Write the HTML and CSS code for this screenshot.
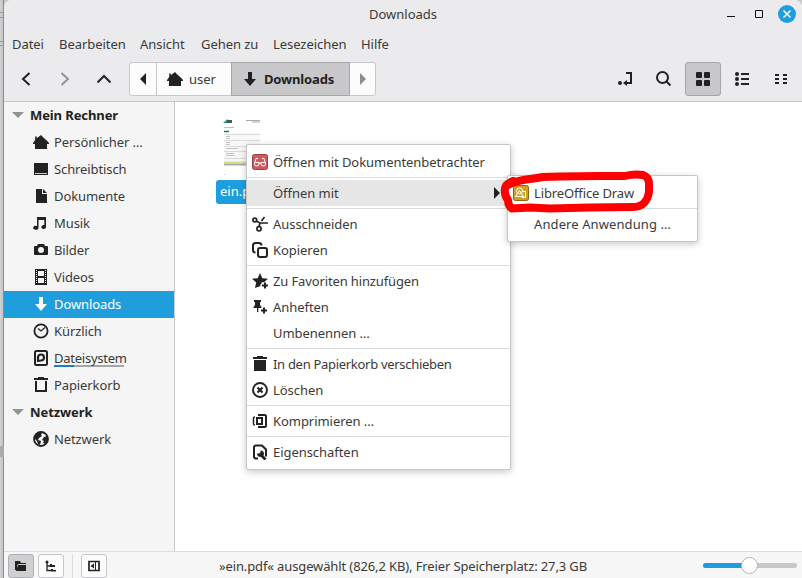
FILE: index.html
```html
<!DOCTYPE html>
<html lang="de">
<head>
    <meta charset="UTF-8">
    <title>Downloads</title>
    <link rel="stylesheet" href="styles.css">
</head>
<body>
    <svg class="sprite">
        <symbol id="home" viewBox="0 0 16 16"><path d="M8 1 3.800 4.200V2.500H2.200V6L0 9v1h2v5h12v-5h2V9l-2-2.200-4-3.500z"/></symbol>
        <symbol id="desktop" viewBox="0 0 16 16"><path d="M1 2h14v12H1z"/><path d="M2 12.500h12" stroke="#f5f5f5" stroke-width=".8"/></symbol>
        <symbol id="doc" viewBox="0 0 16 16"><path d="M3 1h6v5h5v9H3zM10 1l4 4h-4z"/></symbol>
        <symbol id="music" viewBox="0 0 16 16"><path d="M4 2h9v10a2.300 2 0 1 1-1.700-2V5H5.500v8a2.700 2 0 1 1-1.500-2z"/></symbol>
        <symbol id="camera" viewBox="0 0 16 16"><path fill-rule="evenodd" d="M5 2h6l1 2h2q1 0 1 1v7q0 1-1 1H2q-1 0-1-1V5q0-1 1-1h2zM8 5a3 3 0 1 0 0 6 3 3 0 0 0 0-6z"/></symbol>
        <symbol id="film" viewBox="0 0 16 16"><path fill-rule="evenodd" d="M2 0h12v16H2zM5 2v5h6V2zM5 9v5h6V9zM3 1v1h1V1zm0 2v1h1V3zm0 2v1h1V5zm0 2v1h1V7zm0 2v1h1V9zm0 2v1h1v-1zm0 2v1h1v-1zM12 1v1h1V1zm0 2v1h1V3zm0 2v1h1V5zm0 2v1h1V7zm0 2v1h1V9zm0 2v1h1v-1zm0 2v1h1v-1z"/></symbol>
        <symbol id="down" viewBox="0 0 16 16"><path d="M6 1h4v7h4l-6 7-6-7h4z"/></symbol>
        <symbol id="clock" viewBox="0 0 16 16"><g fill="none" stroke="currentColor"><circle cx="8" cy="8" r="6.600" stroke-width="1.800"/><path d="m5 5.500 3 2.500 4-3.500" stroke-width="1.300"/></g></symbol>
        <symbol id="disk" viewBox="0 0 16 16"><g fill="none" stroke="currentColor" stroke-width="2"><rect x="2" y="1" width="12" height="14" rx="1.500"/><path d="M5 11V7.500a3 3 0 1 1 3 3z" stroke-width="2.200"/></g></symbol>
        <symbol id="bin" viewBox="0 0 16 16"><path fill-rule="evenodd" d="M5 0h6v1h4v2H1V1h4zM2 4h12v11H2zm2 0v9h8V4z"/></symbol>
        <symbol id="globe" viewBox="0 0 16 16"><circle cx="8" cy="8" r="7" fill="none" stroke="currentColor" stroke-width="1.800"/><path d="M2 4 6 1l3 1-1 2 1 1-3 2-1 2 3 1-1 4-2-1-1-3-3-3zM11 6l3-1 1 4-3 4-2-1 1-2-2-1z"/></symbol>
        <symbol id="cut" viewBox="0 0 16 16"><g fill="none" stroke="currentColor" stroke-width="1.700"><circle cx="2.800" cy="4" r="1.900"/><circle cx="7" cy="12.700" r="2.100"/><path d="M4.500 5.200 8 7h8M7 10.600 8 7M9.500 5l3-4"/></g></symbol>
        <symbol id="copy" viewBox="0 0 16 16"><g fill="none" stroke="currentColor" stroke-width="2"><rect x="6" y="6" width="9" height="9" rx="2"/><path d="M3.500 10.500Q1 10.500 1 8V3.500Q1 1 3.500 1H7q2.500 0 2.500 2.500"/></g></symbol>
        <symbol id="star" viewBox="0 0 16 16"><path d="m8 0 2.300 5.200 5.700.5-4 3.600H9.500v1.700H8.500v2l-5.500 2 1.200-5.500L0 5.700l5.700-.5z"/><path d="M12 9.500h2v2h2v2h-2v2h-2v-2h-2v-2h2z"/></symbol>
        <symbol id="pin" viewBox="0 0 16 16"><path d="M2 1h7v2H8v3l1.500 2v1H6.300v4H5V9H1.500V8L3 6V3H2zM11 8.500h2v2h2v2h-2v2h-2v-2H9v-2h2z"/></symbol>
        <symbol id="trash" viewBox="0 0 16 16"><path d="M5 0h6v1h4v2H1V1h4zM2 4h12v11H2z"/></symbol>
        <symbol id="delete" viewBox="0 0 16 16"><g fill="none" stroke="currentColor"><circle cx="8" cy="8" r="7" stroke-width="1.900"/><path d="m5.500 5.500 5 5m0-5-5 5" stroke-width="2.200"/></g></symbol>
        <symbol id="pack" viewBox="0 0 16 16"><g fill="none" stroke="currentColor"><path d="M6 2h6.500q1.500 0 1.500 1.500v9q0 1.500-1.500 1.500H6" stroke-width="2"/><path d="M3 4Q1.500 4 1.500 5v6q0 1 1.500 1" stroke-width="1.500"/><rect x="5" y="5" width="5" height="6" stroke-width="2"/></g></symbol>
        <symbol id="props" viewBox="0 0 16 16"><path d="M6 14.500H4q-2 0-2-2V3.500q0-2 2-2h6l4 4v7" fill="none" stroke="currentColor" stroke-width="2"/><path d="M5 9.500h2l1.500-1V6.500q3.500 0 3.500 3.500l-.5 1.500 3 3-1.500 1.500h-1L9 13q-4 0-4-3.500z"/></symbol>
        <symbol id="viewer" viewBox="0 0 16 16"><rect x=".5" y=".5" width="15" height="15" rx="2" fill="#d25a5f" stroke="#983d41"/><g fill="none" stroke="#fff"><path d="M2.500 8.500h4.500v1.500q0 2-2.200 2t-2.300-2zM9 8.500h4.500v1.500q0 2-2.200 2T9 10zM7 9h2M2.500 9 4 4.500h2M13.500 9 12 4.500h-2"/></g></symbol>
        <symbol id="draw" viewBox="0 0 16 16"><rect x=".5" y=".5" width="15" height="15" rx="2" fill="#d2a01c" stroke="#896516"/><g fill="none" stroke="#fff"><circle cx="6.500" cy="6" r="3"/><path d="m2.500 11.500 4-6 4 6zM9.500 6.500h3v6H9"/></g></symbol>
    </svg>

    <div class="window">
        <header>
            <div class="titlebar">
                <span>Downloads</span>
                <svg class="controls" width="76" height="28" viewBox="0 0 76 28">
                    <path d="M4 16.500h8M32.500 10.500h7v7h-7z" fill="none" stroke="#111"/>
                    <circle cx="64" cy="14" r="9" fill="#1f9ede"/>
                    <path d="m60.500 10.500 7 7m0-7-7 7" stroke="#fff" stroke-width="1.500"/>
                </svg>
            </div>
            <nav class="menubar">
                <span>Datei</span><span>Bearbeiten</span><span>Ansicht</span><span>Gehen zu</span><span>Lesezeichen</span><span>Hilfe</span>
            </nav>
            <div class="toolbar">
                <svg class="nav" width="125" height="34" viewBox="0 0 125 34">
                    <g fill="none" stroke="#222" stroke-width="2">
                        <path d="m25.500 11-6.500 6 6.500 6M93.500 20.500l6.500-6.500 6.500 6.500"/>
                        <path d="m57.500 11 6.500 6-6.500 6" stroke="#929292"/>
                    </g>
                </svg>
                <div class="path">
                    <span class="path-prev"><svg width="6" height="12"><path d="M6 0v12L0 6z"/></svg></span>
                    <span class="path-user"><svg class="icon"><use href="#home"/></svg>user</span>
                    <span class="path-here"><svg class="icon"><use href="#down"/></svg><b>Downloads</b></span>
                    <span class="path-next"><svg width="6" height="12"><path d="M0 0v12l6-6z"/></svg></span>
                </div>
                <div class="tools">
                    <span class="tool"><svg width="16" height="16"><path d="M9 2h5v10H9" fill="none" stroke="#222" stroke-width="2"/><circle cx="3" cy="12" r="2"/><path d="m6 12 4-3v6z"/></svg></span>
                    <span class="tool"><svg width="16" height="16"><circle cx="6.500" cy="6.500" r="5.500" fill="none" stroke="#222" stroke-width="2"/><path d="m10.500 10.500 4 4" stroke="#222" stroke-width="2"/></svg></span>
                    <span class="tool active"><svg width="16" height="16"><rect x="1" y="1" width="6" height="6" rx="1"/><rect x="9" y="1" width="6" height="6" rx="1"/><rect x="1" y="9" width="6" height="6" rx="1"/><rect x="9" y="9" width="6" height="6" rx="1"/></svg></span>
                    <span class="tool"><svg width="16" height="16"><circle cx="3" cy="3" r="2"/><circle cx="3" cy="8" r="2"/><circle cx="3" cy="13" r="2"/><path d="M7 2h8v2H7zM7 7h8v2H7zM7 12h8v2H7z"/></svg></span>
                    <span class="tool"><svg width="16" height="16"><path d="M2 3h4v2H2zM2 7h4v2H2zM2 11h4v2H2zM10 3h4v2h-4zM10 7h4v2h-4zM10 11h4v2h-4z"/></svg></span>
                </div>
            </div>
        </header>

        <main>
            <aside>
                <div class="group"><i></i>Mein Rechner</div>
                <div class="place"><svg class="icon"><use href="#home"/></svg>Persönlicher …</div>
                <div class="place"><svg class="icon"><use href="#desktop"/></svg>Schreibtisch</div>
                <div class="place"><svg class="icon"><use href="#doc"/></svg>Dokumente</div>
                <div class="place"><svg class="icon"><use href="#music"/></svg>Musik</div>
                <div class="place"><svg class="icon"><use href="#camera"/></svg>Bilder</div>
                <div class="place"><svg class="icon"><use href="#film"/></svg>Videos</div>
                <div class="place selected"><svg class="icon"><use href="#down"/></svg>Downloads</div>
                <div class="place"><svg class="icon"><use href="#clock"/></svg>Kürzlich</div>
                <div class="place"><svg class="icon"><use href="#disk"/></svg><span class="usage">Dateisystem</span></div>
                <div class="place"><svg class="icon"><use href="#bin"/></svg>Papierkorb</div>
                <div class="group"><i></i>Netzwerk</div>
                <div class="place"><svg class="icon"><use href="#globe"/></svg>Netzwerk</div>
            </aside>
            <section class="files">
                <div class="file">
                    <svg width="38" height="58" viewBox="0 0 38 58">
                        <path d="M0 4 4 .5h1V4z" fill="#2b927d"/>
                        <path d="M4 2.500h5" stroke="#555" stroke-width="3"/>
                        <path d="M23 1.500h14M29 3h8" stroke="#aaa"/>
                        <path d="M1 8.500h10" stroke="#8fd3c6"/>
                        <path d="M1 12.500h5" stroke="#167a67" stroke-width="1.300"/>
                        <path d="M1 14h36v28H1z" fill="#f8f8f8"/>
                        <path d="M1 15.500h36M1 21.500h36M1 27.500h36M1 32.500h36M1 39.500h36" stroke="#dadada"/>
                        <path d="M3 17.500h4M3 19.500h4M3 23.500h4M3 25.500h4M3 29.500h12M3 34.500h8M3 36.500h9" stroke="#c2c2c2"/>
                        <path d="M1 43.500h36" stroke="#d9dd8e" stroke-width="2"/>
                        <path d="M1 45.500h36" stroke="#a5adb0" stroke-width="2"/>
                        <path d="M1 55.500h1" stroke="#ccc"/>
                    </svg>
                    <span>ein.pdf</span>
                </div>
            </section>
        </main>

        <footer>
            <span class="side-btn active"><svg width="16" height="16"><path d="M2 3h5l1 2h5v1H5L4 8v4H2zM5 7h8v6H3z"/></svg></span>
            <span class="side-btn"><svg width="16" height="16"><circle cx="4" cy="4" r="1.500"/><path d="M4 4v8.500h4M4 8h4" fill="none" stroke="#222" stroke-width="1.300"/><path d="M7 6h2v1h3v2H7zM8 11h2v1h3v1.500H8z"/></svg></span>
            <span class="split"></span>
            <span class="side-btn"><svg width="16" height="16"><path d="M3 3.500h10v9H3z" fill="none" stroke="#222" stroke-width="1.700"/><path d="M8 5.500v5L4.500 8zM9 4h1v8H9z"/></svg></span>
            <span class="status">»ein.pdf« ausgewählt (826,2 KB), Freier Speicherplatz: 27,3 GB</span>
            <span class="slider"><i></i><b></b></span>
        </footer>
    </div>

    <div class="menu context">
        <div class="item"><svg class="icon"><use href="#viewer"/></svg>Öffnen mit Dokumentenbetrachter</div>
        <hr>
        <div class="item hover"><span class="icon"></span>Öffnen mit<svg class="arrow" width="6" height="12"><path d="M0 0v12l6-6z"/></svg></div>
        <hr>
        <div class="item"><svg class="icon"><use href="#cut"/></svg>Ausschneiden</div>
        <div class="item"><svg class="icon"><use href="#copy"/></svg>Kopieren</div>
        <hr>
        <div class="item"><svg class="icon"><use href="#star"/></svg><span class="snug">Zu Favoriten hinzufügen</span></div>
        <div class="item"><svg class="icon"><use href="#pin"/></svg>Anheften</div>
        <div class="item"><span class="icon"></span>Umbenennen …</div>
        <hr>
        <div class="item"><svg class="icon"><use href="#trash"/></svg><span class="tight">In den Papierkorb verschieben</span></div>
        <div class="item"><svg class="icon"><use href="#delete"/></svg>Löschen</div>
        <hr>
        <div class="item"><svg class="icon"><use href="#pack"/></svg>Komprimieren …</div>
        <hr>
        <div class="item"><svg class="icon"><use href="#props"/></svg>Eigenschaften</div>
    </div>

    <div class="menu submenu">
        <div class="item"><svg class="icon"><use href="#draw"/></svg><span class="snug">LibreOffice Draw</span></div>
        <hr>
        <div class="item other"><span class="icon"></span>Andere Anwendung …</div>
    </div>

    <svg class="marker" width="160" height="50" viewBox="498 166 160 50">
        <path d="M508 185C518 179 528 180 543 177L560 176.500 600 176 625 176Q634 173.500 643 175Q649 177 649 184L649 192Q648 199 644 203Q640 207 633 207L590 207.500 550 208.500 530 207.500 512 208.500Q508 206 508 200Q504 195 505 189Q505 184 513 181"/>
    </svg>
</body>
</html>
```
FILE: styles.css
```css
* {
    box-sizing: border-box;
}

body {
    margin: 0;
    height: 578px;
    padding-left: 4px;
    overflow: hidden;
    font: 13px "Noto Sans", sans-serif;
    color: #3a3a3a;
    background: linear-gradient(#999 0 0) 0 12px / 3px 1px no-repeat,
        linear-gradient(#999 0 0) 0 17px / 3px 1px no-repeat,
        linear-gradient(#999 0 0) 0 41px / 3px 1px no-repeat,
        linear-gradient(#999 0 0) 0 45px / 3px 1px no-repeat,
        linear-gradient(#aaa 0 0) 0 446px / 4px 11px no-repeat,
        linear-gradient(90deg, #d2d2d2, #c4c4c4 3px, #8e8e8e 3px, #8e8e8e 4px, #c9c9c9 4px);
}

svg {
    fill: #222;
    flex: none;
}

.sprite {
    display: none;
}

.icon {
    width: 16px;
    height: 16px;
    flex: none;
    color: #222;
}

.window {
    height: 578px;
    display: flex;
    flex-direction: column;
    background: #fff;
    border-radius: 8px 8px 0 0;
    overflow: hidden;
}

header {
    height: 102px;
    background: #ebebed;
    border-bottom: 1px solid #c8c8cc;
}

.titlebar {
    height: 28px;
    display: grid;
    grid-template-columns: 1fr auto 1fr;
    align-items: center;
}

.titlebar span {
    grid-column: 2;
}

.controls {
    justify-self: end;
    margin-right: 3px;
}

.menubar {
    height: 34px;
    padding: 0 0 2px 8px;
    display: grid;
    grid-template-columns: 47px 81px 61px 72px 88px auto;
    align-items: center;
    letter-spacing: -.05px;
}

.toolbar {
    height: 34px;
    display: flex;
}

.path {
    width: 247px;
    display: grid;
    grid-template-columns: 26px 75px 119px 25px;
    background: #fcfcfc;
    border: 1px solid #c8c8cc;
    border-radius: 3px;
}

.path span {
    display: flex;
    align-items: center;
}

.path-prev,
.path-next {
    justify-content: center;
}

.path .path-user {
    border-left: 1px solid #c8c8cc;
    padding-left: 10px;
    gap: 6px;
}

.path .path-here {
    background: #c8c8ca;
    border: 1px solid #a6a6a9;
    margin: -1px 0;
    padding-left: 10px;
    gap: 6px;
    color: #222;
    letter-spacing: -.15px;
}

.path-next svg {
    fill: #8a8c8c;
}

.tools {
    margin-left: auto;
    margin-right: 3px;
    display: flex;
    gap: 3px;
}

.tool {
    width: 36px;
    display: grid;
    place-items: center;
    border: 1px solid transparent;
    border-radius: 3px;
}

.tool.active {
    background: #c8c8ca;
    border-color: #a6a6a9;
}

main {
    flex: 1;
    display: flex;
    min-height: 0;
}

aside {
    width: 171px;
    background: #f5f5f5;
    border-right: 1px solid #c8c8cc;
}

.group,
.place {
    height: 27px;
    padding-bottom: 1px;
    display: flex;
    align-items: center;
    letter-spacing: -.1px;
}

.group {
    padding-left: 8px;
    gap: 6px;
    font-weight: bold;
    color: #222;
}

.group i {
    border: 6px solid transparent;
    border-top-color: #929292;
    border-bottom: 0;
}

.place {
    padding-left: 29px;
    gap: 5px;
}

.selected {
    background: #1f9ede;
    color: #fff;
}

.selected svg {
    fill: #fff;
}

.usage {
    letter-spacing: -.25px;
    background: linear-gradient(90deg, #1d7eb8 20px, #a6a6a9 20px) 0 100% / 70px 2px no-repeat;
}

.files {
    flex: 1;
    padding: 17px 0 0 41px;
}

.file {
    width: 52px;
    display: flex;
    flex-direction: column;
    align-items: center;
}

.file span {
    width: 52px;
    height: 24px;
    margin-top: 3px;
    padding-left: 4px;
    line-height: 23px;
    color: #fff;
    background: #1f9ede;
    border-radius: 3px;
}

footer {
    height: 27px;
    padding: 2px 5px 0 4px;
    display: flex;
    background: #f7f7f7;
    border-top: 1px solid #dcdce0;
}

.side-btn {
    width: 26px;
    height: 24px;
    margin-right: 4px;
    display: grid;
    place-items: center;
    background: #fcfcfc;
    border: 1px solid #c8c8cc;
    border-radius: 3px;
}

.side-btn.active {
    background: #d0d0d3;
    border-color: #b0b0b8;
}

.split {
    width: 1px;
    margin: 0 8px 0 4px;
    background: #dcdce0;
}

.status {
    margin-left: 108px;
    line-height: 25px;
    letter-spacing: -.12px;
    white-space: nowrap;
}

.slider {
    width: 94px;
    height: 5px;
    margin: 9px 0 0 auto;
    display: flex;
    align-items: center;
    background: #c8c8cc;
    border-radius: 3px;
}

.slider i {
    width: 40px;
    height: 5px;
    background: #1f9ede;
    border-radius: 3px 0 0 3px;
}

.slider b {
    width: 17px;
    height: 17px;
    margin-left: -2px;
    background: #fff;
    border: 1px solid #b4b4b8;
    border-radius: 50%;
}

.menu {
    position: absolute;
    padding: 4px 0;
    background: #fff;
    border: 1px solid #c6c6c6;
    border-radius: 2px;
    box-shadow: 0 2px 7px rgba(0, 0, 0, .22);
}

.context {
    left: 246px;
    top: 144px;
    width: 265px;
}

.submenu {
    left: 507px;
    top: 175px;
    width: 191px;
}

.item {
    height: 26px;
    padding: 0 10px 0 5px;
    display: flex;
    align-items: center;
    gap: 5px;
    letter-spacing: -.05px;
    white-space: nowrap;
}

.snug {
    letter-spacing: -.13px;
}

.tight {
    letter-spacing: -.3px;
}

.other {
    letter-spacing: .1px;
}

.hover {
    background: #e6e6e6;
}

.arrow {
    margin-left: auto;
}

hr {
    height: 1px;
    margin: 2px 0;
    border: 0;
    background: #dcdcdc;
}

.marker {
    position: absolute;
    left: 498px;
    top: 166px;
}

.marker path {
    fill: none;
    stroke: #f00;
    stroke-width: 8;
    stroke-linecap: round;
    stroke-linejoin: round;
}
```
